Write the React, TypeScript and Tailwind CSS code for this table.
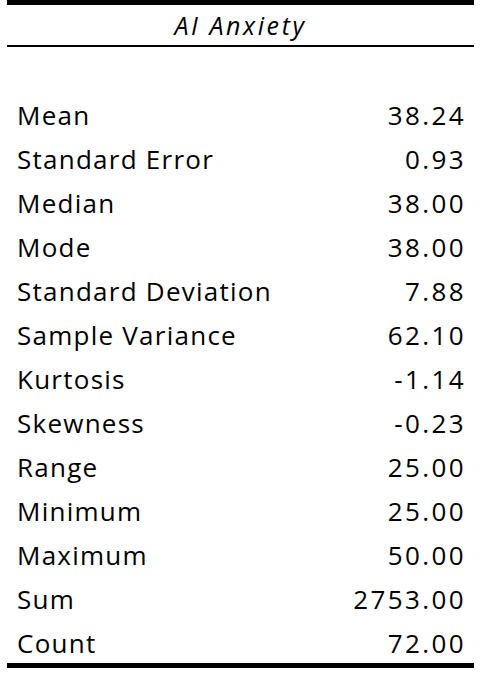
import React from 'react';

const rows: [string, string][] = [
  ['Mean', '38.24'],
  ['Standard Error', '0.93'],
  ['Median', '38.00'],
  ['Mode', '38.00'],
  ['Standard Deviation', '7.88'],
  ['Sample Variance', '62.10'],
  ['Kurtosis', '-1.14'],
  ['Skewness', '-0.23'],
  ['Range', '25.00'],
  ['Minimum', '25.00'],
  ['Maximum', '50.00'],
  ['Sum', '2753.00'],
  ['Count', '72.00'],
];

export default function App() {
  return (
    <div className="w-[480px] h-[676px] bg-white px-[7px] text-black font-['Open_Sans',sans-serif] font-medium text-[26px]">
      <div className="w-[467px] border-t-[5px] border-b-[5px] border-black">
        <div className="h-[42px] pt-[2px] flex items-center justify-center italic text-[25px] tracking-[2.6px] border-b-2 border-black">
          AI Anxiety
        </div>
        <div className="h-[44px]" />
        {rows.map(([label, value]) => (
          <div key={label} className="h-[44px] pt-[4px] flex items-center justify-between px-[10px]">
            <span className="tracking-[1.25px]">{label}</span>
            <span className="tracking-[2.4px] -mr-[2px]">{value}</span>
          </div>
        ))}
      </div>
    </div>
  );
}
